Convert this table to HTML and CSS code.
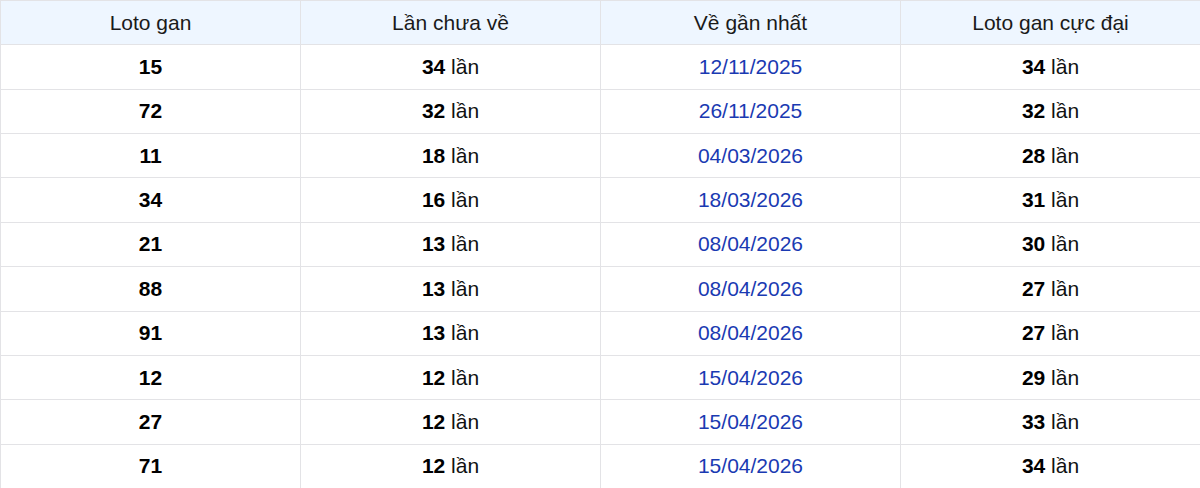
FILE: index.html
```html
<!DOCTYPE html>
<html lang="vi">
<head>
<meta charset="utf-8">
<link rel="stylesheet" href="styles.css">
</head>
<body>
<table class="gan">
  <thead>
    <tr><th>Loto gan</th><th>Lần chưa về</th><th>Về gần nhất</th><th>Loto gan cực đại</th></tr>
  </thead>
  <tbody>
    <tr><td><b>15</b></td><td><b>34</b> lần</td><td class="date">12/11/2025</td><td><b>34</b> lần</td></tr>
    <tr><td><b>72</b></td><td><b>32</b> lần</td><td class="date">26/11/2025</td><td><b>32</b> lần</td></tr>
    <tr><td><b>11</b></td><td><b>18</b> lần</td><td class="date">04/03/2026</td><td><b>28</b> lần</td></tr>
    <tr><td><b>34</b></td><td><b>16</b> lần</td><td class="date">18/03/2026</td><td><b>31</b> lần</td></tr>
    <tr><td><b>21</b></td><td><b>13</b> lần</td><td class="date">08/04/2026</td><td><b>30</b> lần</td></tr>
    <tr><td><b>88</b></td><td><b>13</b> lần</td><td class="date">08/04/2026</td><td><b>27</b> lần</td></tr>
    <tr><td><b>91</b></td><td><b>13</b> lần</td><td class="date">08/04/2026</td><td><b>27</b> lần</td></tr>
    <tr><td><b>12</b></td><td><b>12</b> lần</td><td class="date">15/04/2026</td><td><b>29</b> lần</td></tr>
    <tr><td><b>27</b></td><td><b>12</b> lần</td><td class="date">15/04/2026</td><td><b>33</b> lần</td></tr>
    <tr><td><b>71</b></td><td><b>12</b> lần</td><td class="date">15/04/2026</td><td><b>34</b> lần</td></tr>
  </tbody>
</table>
</body>
</html>
```
FILE: styles.css
```css
html, body {
  margin: 0;
  padding: 0;
  background: #ffffff;
}
body {
  font-family: "Liberation Sans", Arial, sans-serif;
  color: #111111;
  width: 1200px;
  overflow: hidden;
}
.gan {
  width: 1201px;
  border-collapse: collapse;
  table-layout: fixed;
  font-size: 21px;
}
.gan th, .gan td {
  border: 1px solid #e3e3e6;
  text-align: center;
  vertical-align: middle;
  height: 44.36px;
  padding: 0 8px;
  box-sizing: border-box;
}
.gan th {
  background: #eef6ff;
  font-weight: normal;
  color: #1a1a1a;
}
.gan td b {
  font-weight: bold;
  color: #000000;
}
.gan td.date {
  color: #1a3ab2;
}
```
